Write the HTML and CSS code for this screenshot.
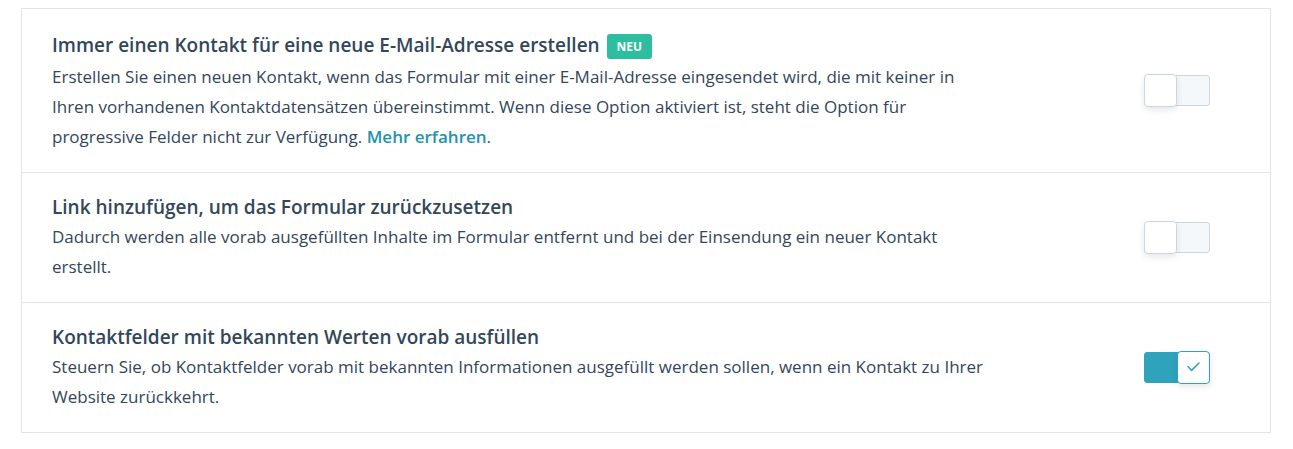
FILE: index.html
```html
<!DOCTYPE html>
<html lang="de">
<head>
<meta charset="utf-8">
<title>Formularoptionen</title>
<link rel="stylesheet" href="styles.css">
</head>
<body>
<div class="page">
  <div class="card">
    <div class="row">
      <div class="text">
        <div class="title with-badge">Immer einen Kontakt für eine neue E-Mail-Adresse erstellen <span class="badge">NEU</span></div>
        <p class="desc">Erstellen Sie einen neuen Kontakt, wenn das Formular mit einer E-Mail-Adresse eingesendet wird, die mit keiner in Ihren vorhandenen Kontaktdatensätzen übereinstimmt. Wenn diese Option aktiviert ist, steht die Option für progressive Felder nicht zur Verfügung. <a class="link" href="#">Mehr erfahren</a>.</p>
      </div>
      <div class="toggle">
        <span class="knob"></span>
      </div>
    </div>
    <div class="row">
      <div class="text">
        <div class="title">Link hinzufügen, um das Formular zurückzusetzen</div>
        <p class="desc">Dadurch werden alle vorab ausgefüllten Inhalte im Formular entfernt und bei der Einsendung ein neuer Kontakt erstellt.</p>
      </div>
      <div class="toggle">
        <span class="knob"></span>
      </div>
    </div>
    <div class="row">
      <div class="text">
        <div class="title">Kontaktfelder mit bekannten Werten vorab ausfüllen</div>
        <p class="desc">Steuern Sie, ob Kontaktfelder vorab mit bekannten Informationen ausgefüllt werden sollen, wenn ein Kontakt zu Ihrer Website zurückkehrt.</p>
      </div>
      <div class="toggle on">
        <span class="knob">
          <svg width="13" height="10" viewBox="0 0 13 10"><path d="M1 4.6 L4.6 8.4 L12 1" fill="none" stroke="#2ea3bb" stroke-width="1.5" stroke-linecap="round" stroke-linejoin="round"/></svg>
        </span>
      </div>
    </div>
  </div>
</div>
</body>
</html>
```

FILE: styles.css
```css
html, body {
  margin: 0;
  padding: 0;
  background: #ffffff;
}

body {
  font-family: "Open Sans", Lato, "Liberation Sans", sans-serif;
  color: #33475b;
}

.page {
  padding: 8px 22px 0 21px;
}

.card {
  border: 1px solid #e1e4ee;
  background: #ffffff;
}

.row {
  display: flex;
  align-items: center;
  padding: 19px 60px 20px 30px;
  border-top: 1px solid #e1e4ee;
}

.row:first-child {
  border-top: none;
}

.text {
  width: 932px;
}

.title {
  font-size: 19px;
  font-weight: 600;
  line-height: 30px;
}

.title.with-badge {
  padding-top: 2px;
  padding-bottom: 2px;
}

.badge {
  display: inline-block;
  vertical-align: 1px;
  background: #2dbd9f;
  color: #ffffff;
  font-size: 12px;
  font-weight: 700;
  line-height: 25px;
  padding: 0 10px;
  border-radius: 3px;
  margin-left: 2px;
}

.desc {
  margin: 0;
  font-size: 17px;
  line-height: 30px;
}

.link {
  color: #1f93ad;
  font-weight: 600;
  text-decoration: none;
}

.toggle {
  margin-left: auto;
  width: 64px;
  height: 29px;
  display: flex;
  align-items: center;
  border: 1px solid #cbd6e2;
  border-radius: 3px;
  background: #f5f8fa;
}

.knob {
  width: 31px;
  height: 31px;
  margin: -1px;
  border: 1px solid #cbd6e2;
  border-radius: 4px;
  background: #ffffff;
  box-shadow: 0 3px 6px rgba(45, 62, 80, 0.12);
  display: flex;
  align-items: center;
  justify-content: center;
}

.toggle.on {
  justify-content: flex-end;
  background: #2ea3bb;
  border-color: #2ea3bb;
}

.toggle.on .knob {
  border-color: #2ea3bb;
}
```
